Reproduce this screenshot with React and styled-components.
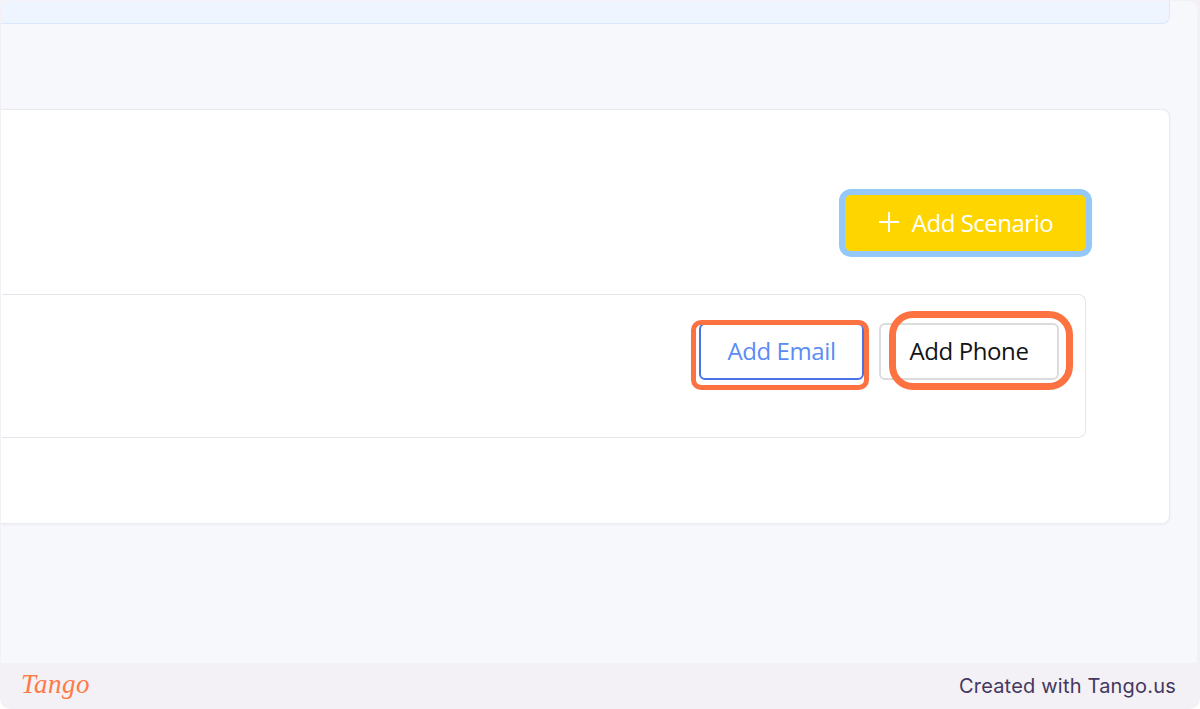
import styled, { createGlobalStyle } from 'styled-components';

const GlobalStyle = createGlobalStyle`
  html, body {
    margin: 0;
    padding: 0;
    background: #ffffff;
  }
  * {
    box-sizing: border-box;
  }
`;

const ORANGE = '#fd7241';

const Frame = styled.div`
  width: 1200px;
  height: 709px;
  background: #f3f0f6;
  border-radius: 0 0 10px 10px;
  padding: 1px 3px 0 1px;
  display: flex;
  flex-direction: column;
  overflow: hidden;
`;

const Shot = styled.div`
  flex: 1;
  background: #f6f8fc;
  border-radius: 0 8px 0 0;
  display: flex;
  flex-direction: column;
  overflow: hidden;
`;

const TopPanel = styled.div`
  width: 1169px;
  height: 23px;
  background: #eef5ff;
  border: 1px solid #dbe7fb;
  border-top: none;
  border-left: none;
  border-radius: 0 0 8px 0;
`;

const Card = styled.div`
  width: 1169px;
  margin-top: 85px;
  background: #ffffff;
  border: 1px solid #eaeaef;
  border-left: none;
  border-radius: 0 8px 8px 0;
  box-shadow: 0 1px 3px rgba(20, 30, 60, 0.05);
  padding: 85px 83px 85px 0;
  display: flex;
  flex-direction: column;
  align-items: flex-end;
  gap: 43px;
`;

const ScenarioButton = styled.button`
  height: 56px;
  width: 241px;
  border: none;
  border-radius: 6px;
  background: #ffd500;
  box-shadow: 0 0 0 6px #93c8f8;
  color: #ffffff;
  font-family: 'Open Sans', 'DejaVu Sans', sans-serif;
  font-size: 24px;
  font-weight: 500;
  letter-spacing: -0.5px;
  display: flex;
  align-items: center;
  justify-content: center;
  gap: 12px;
  padding: 0 0 2px 0;
`;

const ContactBox = styled.div`
  width: 1084px;
  height: 144px;
  border: 1.5px solid #e4e4ea;
  border-left: none;
  border-radius: 0 8px 8px 0;
  padding: 28px 26px 0 0;
  display: flex;
  justify-content: flex-end;
  align-items: flex-start;
  gap: 15px;
`;

const ActionButton = styled.button`
  position: relative;
  width: ${(p) => p.$width}px;
  height: 57px;
  background: #ffffff;
  border: ${(p) => (p.$primary ? '2px solid #4a72e6' : '2px solid #dcdcdc')};
  border-radius: 6px;
  color: ${(p) => (p.$primary ? '#5b8cf6' : '#141414')};
  font-family: 'Open Sans', 'DejaVu Sans', sans-serif;
  font-size: 24px;
  letter-spacing: -0.4px;
  padding: 0 0 2px 0;
`;

const Highlight = styled.span`
  position: absolute;
  top: ${(p) => p.$top}px;
  left: ${(p) => p.$left}px;
  right: ${(p) => p.$right}px;
  bottom: ${(p) => p.$bottom}px;
  border: ${(p) => p.$stroke}px solid ${ORANGE};
  border-radius: ${(p) => p.$radius}px;
  pointer-events: none;
`;

const Footer = styled.div`
  height: 46px;
  display: flex;
  align-items: center;
  justify-content: space-between;
  padding: 0 21px 0 20px;
`;

const Logo = styled.span`
  font-family: 'Liberation Serif', serif;
  font-style: italic;
  font-size: 27px;
  font-weight: 400;
  color: #ff7a45;
  letter-spacing: 0.5px;
  margin-top: -4px;
`;

const Credit = styled.span`
  font-family: 'Inter', 'Lato', sans-serif;
  font-size: 20px;
  color: #44385e;
  letter-spacing: 0.2px;
`;

const PlusIcon = () => (
  <svg width="22" height="22" viewBox="0 0 22 22" fill="none">
    <path d="M11 1v20M1 11h20" stroke="#ffffff" strokeWidth="2" />
  </svg>
);

export default function App() {
  return (
    <>
      <GlobalStyle />
      <Frame>
        <Shot>
          <TopPanel />
          <Card>
            <ScenarioButton>
              <PlusIcon />
              Add Scenario
            </ScenarioButton>
            <ContactBox>
              <ActionButton $primary $width={165}>
                Add Email
                <Highlight $top={-5} $left={-10} $right={-7} $bottom={-12} $stroke={5} $radius={10} />
              </ActionButton>
              <ActionButton $width={180}>
                Add Phone
                <Highlight $top={-14} $left={8} $right={-16} $bottom={-12} $stroke={7} $radius={24} />
              </ActionButton>
            </ContactBox>
          </Card>
        </Shot>
        <Footer>
          <Logo>Tango</Logo>
          <Credit>Created with Tango.us</Credit>
        </Footer>
      </Frame>
    </>
  );
}
